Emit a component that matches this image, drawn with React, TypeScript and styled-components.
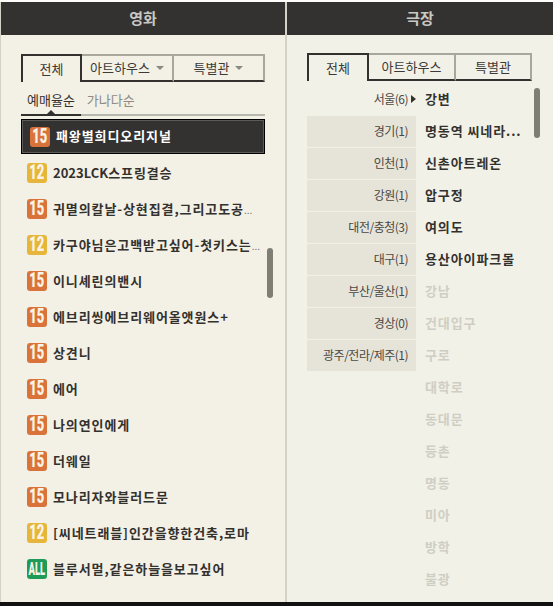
import React from "react";
import styled, { createGlobalStyle } from "styled-components";

const Global = createGlobalStyle`
  html, body { margin: 0; padding: 0; background: #fff; }
  body { font-family: "Noto Sans CJK KR", "Noto Sans", sans-serif; }
  * { box-sizing: border-box; }
`;

const Page = styled.div`
  width: 553px;
  height: 606px;
  display: flex;
  flex-direction: column;
  overflow: hidden;
  background: #111;
`;
const Columns = styled.div`
  height: 602px;
  display: grid;
  grid-template-columns: 286px 267px;
  background: #fdfdfb;
  padding-top: 2px;
`;
const Panel = styled.section<{ $side: "l" | "r" }>`
  position: relative;
  display: flex;
  flex-direction: column;
  min-width: 0;
  border-left: 1px solid #d3d2c4;
  border-right: ${(p) => (p.$side === "l" ? "1px solid #d3d2c4" : "0")};
  background: ${(p) => (p.$side === "l" ? "#f3f0e6" : "#f2f1e7")};
`;
const Title = styled.h2`
  margin: 0;
  height: 33px;
  background: #333230;
  color: #c9c8c3;
  font-size: 15px;
  font-weight: 700;
  line-height: 31px;
  text-align: center;
`;
const Tabs = styled.div<{ $cols: string; $left: number; $w: number; $top: number }>`
  display: grid;
  grid-template-columns: ${(p) => p.$cols};
  width: ${(p) => p.$w}px;
  height: 28px;
  margin: ${(p) => p.$top}px 0 0 ${(p) => p.$left}px;
`;
const Tab = styled.div<{ $on?: boolean }>`
  display: flex;
  align-items: center;
  justify-content: center;
  gap: 6px;
  padding-bottom: 2px;
  font-size: 13px;
  color: #3c3a38;
  ${(p) =>
    p.$on
      ? `border: 2px solid #33312e; border-bottom: 0;`
      : `border-top: 2px solid #a9a79b; border-right: 2px solid #a9a79b; border-bottom: 2px solid #33312e;`}
`;
const Caret = styled.i`
  width: 0;
  height: 0;
  margin-top: 1px;
  border-left: 4px solid transparent;
  border-right: 4px solid transparent;
  border-top: 4px solid #8a8880;
`;
const SortBar = styled.div`
  position: relative;
  display: flex;
  gap: 12px;
  margin: 0 0 0 20px;
  width: 244px;
  height: 34px;
  padding: 8px 0 0 6px;
  border-bottom: 2px solid #b9b8af;
  font-size: 13px;
  line-height: 20px;
`;
const SortItem = styled.span<{ $on?: boolean }>`
  color: ${(p) => (p.$on ? "#33312e" : "#8d8b84")};
`;
const SortMark = styled.i`
  position: absolute;
  left: 0;
  bottom: -2px;
  width: 60px;
  height: 2px;
  background: #33312e;
  &::after {
    content: "";
    position: absolute;
    left: 26px;
    top: -4px;
    border-left: 4px solid transparent;
    border-right: 4px solid transparent;
    border-bottom: 4px solid #33312e;
  }
`;
const MovieList = styled.ul`
  list-style: none;
  margin: 3px 0 0 20px;
  padding: 0;
  width: 248px;
`;
const Movie = styled.li<{ $on?: boolean }>`
  display: flex;
  align-items: center;
  gap: 6px;
  height: 36px;
  width: 244px;
  padding-left: 6px;
  font-size: 13px;
  font-weight: 700;
  letter-spacing: 0.9px;
  color: ${(p) => (p.$on ? "#fff" : "#33312e")};
  ${(p) =>
    p.$on &&
    `background: #333230; border: 1px solid #000; outline: 1px solid #5c5b57; outline-offset: -2px; height: 35px; margin-bottom: 1px; padding-left: 8px;`}
`;
const MovieName = styled.span`
  padding-bottom: 2px;
  white-space: nowrap;
`;
const Latin = styled.span`
  letter-spacing: 0;
`;
const Dots = styled.span`
  font-size: 10px;
  font-weight: 400;
  letter-spacing: 0;
  color: #77756f;
`;
const RATING = { "15": "#d9733a", "12": "#e6b63c", ALL: "#1e9c57" } as const;
const Badge = styled.span<{ $r: keyof typeof RATING }>`
  flex: none;
  width: 20px;
  height: 20px;
  border-radius: 3px;
  background: ${(p) => RATING[p.$r]};
  display: flex;
  align-items: center;
  justify-content: center;
`;
const BadgeText = styled.b<{ $wide?: boolean }>`
  display: block;
  font-family: "Roboto", sans-serif;
  font-weight: 900;
  font-size: 10px;
  letter-spacing: 0;
  line-height: 10px;
  color: #f8f3e6;
  transform: scale(${(p) => (p.$wide ? "0.95, 1.9" : "1.3, 2")});
`;
const Scroll = styled.i<{ $x: number; $y: number }>`
  position: absolute;
  left: ${(p) => p.$x}px;
  top: ${(p) => p.$y}px;
  width: 6px;
  height: 50px;
  border-radius: 3px;
  background: #7f7e74;
`;
const Split = styled.div`
  display: grid;
  grid-template-columns: 109px 1fr;
  margin: 3px 0 0 20px;
  width: 225px;
`;
const Regions = styled.ul`
  list-style: none;
  margin: 0;
  padding: 0;
`;
const Region = styled.li<{ $on?: boolean }>`
  position: relative;
  height: 32px;
  padding-right: 8px;
  text-align: right;
  font-size: 12px;
  line-height: 30px;
  letter-spacing: -0.5px;
  color: #4a4845;
  background: ${(p) => (p.$on ? "transparent" : "#e6e4d9")};
  border-bottom: 1px solid #f2f1e7;
  ${(p) =>
    p.$on &&
    `&::after { content: ""; position: absolute; right: 0; top: 11px; border-top: 4px solid transparent; border-bottom: 4px solid transparent; border-left: 5px solid #33312e; }`}
`;
const Theaters = styled.ul`
  list-style: none;
  margin: 0;
  padding: 0 0 0 9px;
`;
const Theater = styled.li<{ $off?: boolean }>`
  height: 32px;
  font-size: 13px;
  font-weight: 700;
  letter-spacing: 0.9px;
  line-height: 30px;
  white-space: nowrap;
  color: ${(p) => (p.$off ? "#cfcec4" : "#33312e")};
`;

const movies: [keyof typeof RATING, React.ReactNode][] = [
  ["15", "패왕별희디오리지널"],
  ["12", <><Latin>2023LCK</Latin>스프링결승</>],
  ["15", <>귀멸의칼날-상현집결,그리고도공<Dots>...</Dots></>],
  ["12", <>카구야님은고백받고싶어-첫키스는<Dots>...</Dots></>],
  ["15", "이니셰린의밴시"],
  ["15", "에브리씽에브리웨어올앳원스+"],
  ["15", "상견니"],
  ["15", "에어"],
  ["15", "나의연인에게"],
  ["15", "더웨일"],
  ["15", "모나리자와블러드문"],
  ["12", "[씨네트래블]인간을향한건축,로마"],
  ["ALL", "블루서멀,같은하늘을보고싶어"],
];
const regions = ["서울(6)", "경기(1)", "인천(1)", "강원(1)", "대전/충청(3)", "대구(1)", "부산/울산(1)", "경상(0)", "광주/전라/제주(1)"];
const theaters: [string, boolean?][] = [
  ["강변"], ["명동역 씨네라..."], ["신촌아트레온"], ["압구정"], ["여의도"], ["용산아이파크몰"],
  ["강남", true], ["건대입구", true], ["구로", true], ["대학로", true], ["동대문", true],
  ["등촌", true], ["명동", true], ["미아", true], ["방학", true], ["불광", true],
];

export default function App() {
  return (
    <Page>
      <Global />
      <Columns>
        <Panel $side="l">
          <Title>영화</Title>
          <Tabs $cols="61px 92px 91px" $left={20} $w={244} $top={19}>
            <Tab $on>전체</Tab>
            <Tab>아트하우스<Caret /></Tab>
            <Tab>특별관<Caret /></Tab>
          </Tabs>
          <SortBar>
            <SortItem $on>예매율순</SortItem>
            <SortItem>가나다순</SortItem>
            <SortMark />
          </SortBar>
          <MovieList>
            {movies.map(([r, name], i) => (
              <Movie key={i} $on={i === 0}>
                <Badge $r={r}><BadgeText $wide={r === "ALL"}>{r}</BadgeText></Badge>
                <MovieName>{name}</MovieName>
              </Movie>
            ))}
          </MovieList>
          <Scroll $x={266} $y={246} />
        </Panel>
        <Panel $side="r">
          <Title>극장</Title>
          <Tabs $cols="62px 87px 76px" $left={20} $w={225} $top={18}>
            <Tab $on>전체</Tab>
            <Tab>아트하우스</Tab>
            <Tab>특별관</Tab>
          </Tabs>
          <Split>
            <Regions>
              {regions.map((r, i) => (
                <Region key={r} $on={i === 0}>{r}</Region>
              ))}
            </Regions>
            <Theaters>
              {theaters.map(([t, off]) => (
                <Theater key={t} $off={off}>{t}</Theater>
              ))}
            </Theaters>
          </Split>
          <Scroll $x={247} $y={86} />
        </Panel>
      </Columns>
    </Page>
  );
}
